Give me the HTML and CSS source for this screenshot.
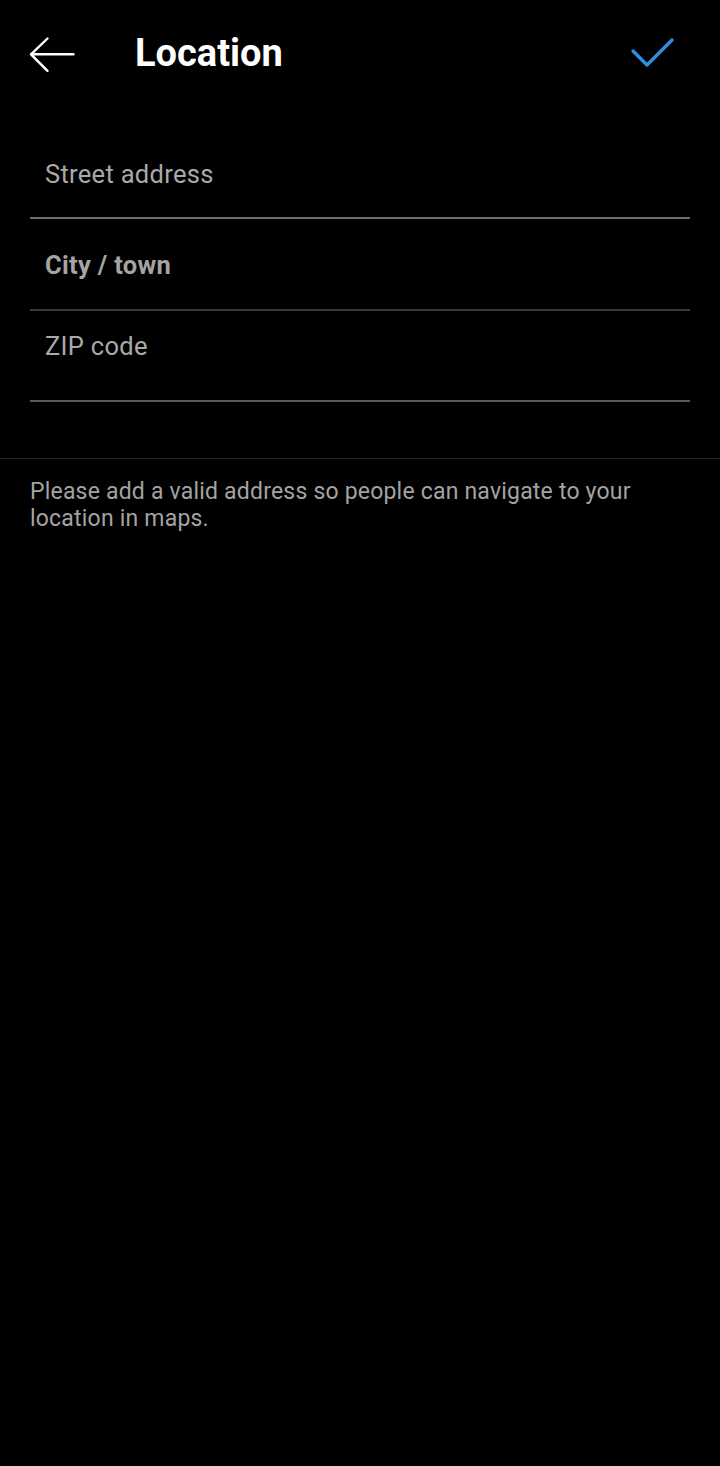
FILE: index.html
```html
<!DOCTYPE html>
<html>
<head>
<meta charset="utf-8">
<link rel="stylesheet" href="styles.css">
</head>
<body>
<div class="screen">
  <header class="topbar">
    <svg class="icon-back" width="720" height="108" viewBox="0 0 720 108">
      <path d="M73.5 54.3H31 M47.5 38.5L31 54.3L47.5 70.8" fill="none" stroke="#fff" stroke-width="2.4" stroke-linecap="round" stroke-linejoin="round"/>
      <path d="M633 51L647 65L672 40" fill="none" stroke="#2b8fe3" stroke-width="3.4" stroke-linecap="round" stroke-linejoin="round"/>
    </svg>
    <h1 class="title">Location</h1>
  </header>
  <div class="field field-street"><span class="label">Street address</span></div>
  <div class="field field-city"><span class="label label-bold">City / town</span></div>
  <div class="field field-zip"><span class="label">ZIP code</span></div>
  <div class="divider"></div>
  <p class="helper">Please add a valid address so people can navigate to your location in maps.</p>
</div>
</body>
</html>
```

FILE: styles.css
```css
html, body {
  margin: 0;
  padding: 0;
  background: #000;
}
.screen {
  width: 720px;
  height: 1466px;
  background: #000;
  font-family: Roboto, "Noto Sans", sans-serif;
  overflow: hidden;
}
.topbar {
  position: relative;
  height: 108px;
}
.icon-back {
  position: absolute;
  left: 0;
  top: 0;
}
.title {
  margin: 0;
  padding: 30px 0 0 135px;
  font-size: 38px;
  line-height: 46px;
  font-weight: 700;
  color: #fff;
  position: relative;
}
.field {
  margin: 0 30px;
  padding-left: 15px;
  font-size: 25.5px;
  letter-spacing: 0.3px;
  line-height: 28px;
  color: #a9a9a9;
}
.label { display: block; }
.label-bold { font-weight: 700; color: #a4a4a4; }
.field-street {
  padding-top: 52px;
  padding-bottom: 29px;
  border-bottom: 2px solid #6e6e6e;
}
.field-city {
  padding-top: 32px;
  padding-bottom: 30px;
  border-bottom: 2px solid #3a3a3a;
}
.field-zip {
  padding-top: 21px;
  padding-bottom: 40px;
  border-bottom: 2px solid #5a5a5a;
}
.divider {
  margin-top: 56px;
  height: 1px;
  background: #262626;
}
.helper {
  margin: 0;
  padding: 19px 30px 0 30px;
  font-size: 23px;
  letter-spacing: 0.2px;
  line-height: 27px;
  color: #a3a3a3;
}
```
